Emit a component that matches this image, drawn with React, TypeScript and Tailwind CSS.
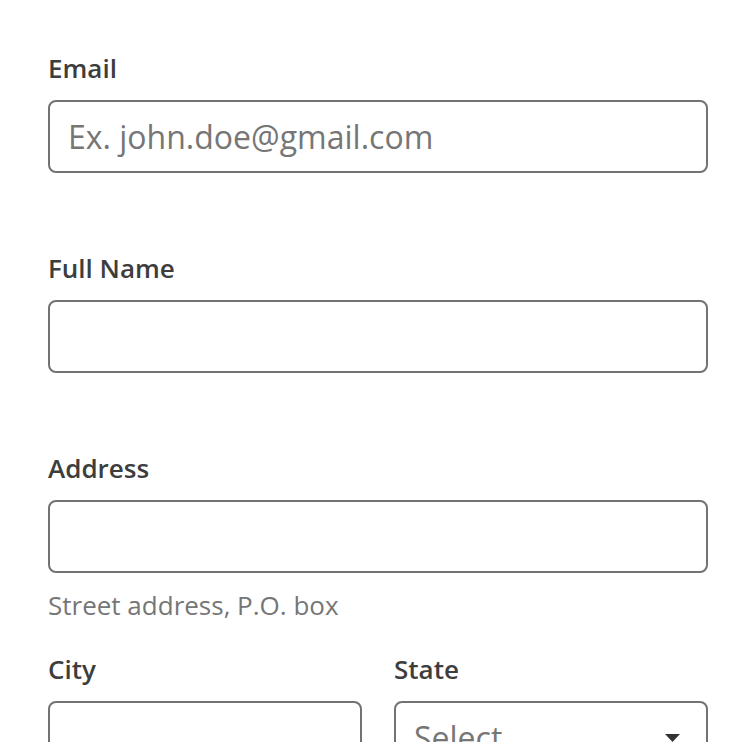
const font = { fontFamily: '"Open Sans", "Noto Sans", sans-serif' }

function Label({ children }: { children: string }) {
  return <label className="block text-[26px] leading-[36px] font-semibold text-[#3d3d3d]">{children}</label>
}

function TextInput({ placeholder }: { placeholder?: string }) {
  return (
    <input
      type="text"
      placeholder={placeholder}
      className="mt-[14px] box-border block h-[73px] w-full rounded-[8px] border-2 border-[#727272] bg-white px-[18px] text-[32px] text-[#333] outline-none placeholder:text-[#767676]"
    />
  )
}

export default function App() {
  return (
    <div className="min-h-[742px] bg-white px-12 pt-[50px]" style={font}>
      <div>
        <Label>Email</Label>
        <TextInput placeholder="Ex. john.doe@gmail.com" />
      </div>

      <div className="mt-[77px]">
        <Label>Full Name</Label>
        <TextInput />
      </div>

      <div className="mt-[77px]">
        <Label>Address</Label>
        <TextInput />
        <p className="mt-[14px] text-[26px] leading-[36px] text-[#767676]">Street address, P.O. box</p>
      </div>

      <div className="mt-[28px] grid grid-cols-2 gap-8">
        <div>
          <Label>City</Label>
          <TextInput />
        </div>
        <div>
          <Label>State</Label>
          <div className="mt-[14px] box-border flex h-[73px] w-full items-center justify-between rounded-[8px] border-2 border-[#727272] bg-white pl-[18px] pr-[26px]">
            <span className="text-[32px] text-[#767676]">Select</span>
            <svg width="15" height="8" viewBox="0 0 15 8">
              <path d="M0 0 H15 L7.5 8 Z" fill="#333" />
            </svg>
          </div>
        </div>
      </div>
    </div>
  )
}
